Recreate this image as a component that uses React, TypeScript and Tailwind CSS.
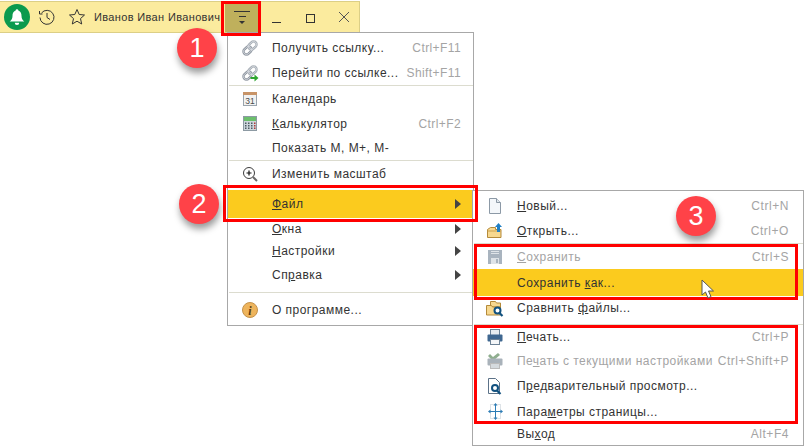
import React from 'react';

const font = 'font-["Liberation_Sans",Arial,sans-serif]';

function LinkIcon({ go }: { go?: boolean }) {
  return (
    <svg width="18" height="18" viewBox="0 0 18 18" fill="none">
      <g transform="rotate(-45 9 9)">
        <rect x="1" y="6" width="9" height="6" rx="3" stroke="#8a929c" strokeWidth="2.4" fill="#fff" />
        <rect x="8" y="6" width="9" height="6" rx="3" stroke="#a3aab2" strokeWidth="2.4" />
        <rect x="8" y="6" width="9" height="6" rx="3" stroke="#dfe3e8" strokeWidth="0.8" />
        <rect x="1" y="6" width="9" height="6" rx="3" stroke="#dfe3e8" strokeWidth="0.8" />
      </g>
      {go && <path d="M9.500 13h4v-2.500l4 3.500-4 3.500V15h-4z" fill="#2fa62f" />}
    </svg>
  );
}

function CalendarIcon() {
  return (
    <svg width="16" height="16" viewBox="0 0 16 16">
      <rect x="1.500" y="1.500" width="13" height="13" fill="#f2f2f2" stroke="#9aa4ad" />
      <rect x="1" y="1" width="14" height="3" fill="#c89468" />
      <text x="8" y="13" fontSize="8.500" textAnchor="middle" fill="#4a4a4a" fontFamily="Liberation Sans">31</text>
    </svg>
  );
}

function CalcIcon() {
  return (
    <svg width="14" height="15" viewBox="0 0 14 15">
      <rect x="0.500" y="0.500" width="13" height="14" fill="#cdd6dc" stroke="#8d9aa3" />
      <rect x="1" y="1" width="12" height="4" fill="#6cbf6c" />
      {[2, 5, 8, 11].map(x => [6.5, 9, 11.5].map(y => <rect key={`${x}-${y}`} x={x} y={y} width="1.500" height="1.500" fill={x === 11 ? '#b03a3a' : '#4d5a63'} />))}
    </svg>
  );
}

function ZoomIcon() {
  return (
    <svg width="16" height="16" viewBox="0 0 16 16" fill="none">
      <circle cx="7" cy="7" r="5.500" stroke="#3c3c3c" fill="#fff" />
      <path d="M4.500 7h5M7 4.500v5" stroke="#111" strokeWidth="1.200" />
      <path d="M11 11l4 4" stroke="#6a6a6a" strokeWidth="2" />
    </svg>
  );
}

function InfoIcon() {
  return (
    <svg width="16" height="16" viewBox="0 0 16 16">
      <circle cx="8" cy="8" r="7.500" fill="#eeb45c" stroke="#c4924a" />
      <text x="8" y="12.500" fontSize="12" fontWeight="700" fontStyle="italic" textAnchor="middle" fill="#5a3c10" fontFamily="Liberation Serif">i</text>
    </svg>
  );
}

function NewIcon() {
  return (
    <svg width="14" height="16" viewBox="0 0 14 16">
      <path d="M1.500.5h7l4 4v11h-11z" fill="#f4f7fa" stroke="#8c99a6" />
      <path d="M8.500.5v4h4" fill="#dfe6ec" stroke="#8c99a6" />
    </svg>
  );
}

function OpenIcon() {
  return (
    <svg width="16" height="16" viewBox="0 0 16 16">
      <path d="M.5 6.500l3-2h5v2h5.500v8H.5z" fill="#f7d88f" stroke="#b48a3a" />
      <path d="M.5 8h13.500" stroke="#c9a04e" />
      <path d="M11.500 0l3.500 4h-2v5h-3V4H8z" fill="#1f7fc4" />
    </svg>
  );
}

function SaveIcon() {
  return (
    <svg width="14" height="14" viewBox="0 0 14 14">
      <rect width="14" height="14" fill="#a9b4bf" />
      <rect x="3" y="1" width="8" height="1" fill="#dfe4e8" />
      <rect x="3" y="3" width="8" height="1" fill="#dfe4e8" />
      <rect x="3" y="8" width="8" height="6" fill="#dfe4e8" />
      <rect x="8" y="9" width="2" height="4" fill="#a9b4bf" />
    </svg>
  );
}

function CompareIcon() {
  return (
    <svg width="18" height="17" viewBox="0 0 18 17">
      <path d="M4.500 1.500h5l1 1.500h4v4h-10z" fill="#f7d88f" stroke="#b48a3a" />
      <path d="M.5 5.500h5l1 1.500h8v8H.5z" fill="#f7d88f" stroke="#b48a3a" />
      <circle cx="11.500" cy="10.500" r="3" fill="#fff" stroke="#11517f" strokeWidth="2" />
      <path d="M13.500 13l3 3" stroke="#11517f" strokeWidth="2.200" />
    </svg>
  );
}

function PrintIcon({ muted }: { muted?: boolean }) {
  const dark = muted ? '#a9b2ba' : '#3f6790';
  return (
    <svg width="16" height="16" viewBox="0 0 16 16">
      {muted ? (
        <path d="M1 3l2-2 3 3 5-4 2 2-7 6z" fill="#8fae8f" />
      ) : (
        <rect x="3.500" y="0.500" width="9" height="6" fill="#e8edf1" stroke="#6d8296" />
      )}
      <rect x="0.500" y="5.500" width="15" height="7" rx="1" fill={dark} />
      <rect x="3.500" y="10.500" width="9" height="5" fill={muted ? '#d5dade' : '#f4f6f8'} stroke={muted ? '#bbb' : '#6d8296'} />
    </svg>
  );
}

function PreviewIcon() {
  return (
    <svg width="16" height="17" viewBox="0 0 16 17">
      <path d="M1.500.5h7l4 4v11h-11z" fill="#fff" stroke="#5c7288" />
      <circle cx="8" cy="10" r="3" fill="#fff" stroke="#11517f" strokeWidth="2" />
      <path d="M10 12.500l3.500 3.500" stroke="#11517f" strokeWidth="2.200" />
    </svg>
  );
}

function PageIcon() {
  return (
    <svg width="15" height="17" viewBox="0 0 15 17" fill="none">
      <rect x="2.500" y="1.500" width="10" height="14" stroke="#bcc6cf" strokeDasharray="1 1" />
      <path d="M7.500 1v15M1 8.500h13" stroke="#2c7cb5" />
      <path d="M7.500 0l2 2.500h-4zM7.500 17l2-2.500h-4zM0 8.500l2.500-2v4zM15 8.500l-2.500-2v4z" fill="#2c7cb5" />
    </svg>
  );
}

function Row({ h, icon, children, hint, arrow, active, muted, sub }: {
  h: string;
  icon?: React.ReactNode;
  children: React.ReactNode;
  hint?: string;
  arrow?: boolean;
  active?: boolean;
  muted?: boolean;
  sub?: boolean;
}) {
  return (
    <div className={`flex items-center ${h} ${active ? 'bg-[#fbcb1e]' : ''}`}>
      <div className="w-[44px] flex justify-center shrink-0">{icon}</div>
      <div className={`flex-1 whitespace-nowrap tracking-[0.47px] ${muted ? 'text-[#a4a4a4]' : 'text-[#333]'}`}>{children}</div>
      {hint && <div className={`text-[#a4a4a4] whitespace-nowrap ${sub ? 'pr-[14px] tracking-[0.55px]' : 'pr-[12px] tracking-[0.4px]'}`}>{hint}</div>}
      {arrow && (
        <svg width="8" height="10" viewBox="0 0 8 10" className="mr-[11px]">
          <path d="M1 0l6 5-6 5z" fill="#444" />
        </svg>
      )}
    </div>
  );
}

function Sep() {
  return <div className="h-px bg-[#dcdccf] ml-px" />;
}

function Badge({ n, className }: { n: number; className: string }) {
  return (
    <div className={`absolute w-[40px] h-[40px] rounded-full bg-[#ff4248] text-white text-[27px] flex items-center justify-center shadow-[1px_5px_7px_rgba(0,0,0,0.4)] ${className}`}>
      {n}
    </div>
  );
}

export default function App() {
  return (
    <div className={`relative w-[804px] h-[447px] bg-white overflow-hidden text-[12px] pt-px ${font}`}>
      {/* title bar */}
      <div className="w-[360px] h-[32px] bg-[#fbeb9e] border border-l-0 border-[#dccf86] flex items-center pl-[4px]">
        <div className="w-[26px] h-[26px] rounded-full bg-[#0b9a4e] flex items-center justify-center shrink-0">
          <svg width="18" height="18" viewBox="0 0 16 16"><path d="M8 1a1.200 1.200 0 011.200 1.200C11.500 3 12 5 12 7c0 2.500 1 3.500 2.500 5h-13C3 10.500 4 9.500 4 7c0-2 .5-4 2.800-4.800A1.200 1.200 0 018 1zM6 13h4a2 2 0 01-4 0z" fill="#fff" /></svg>
        </div>
        <svg width="18" height="18" viewBox="0 0 18 18" fill="none" className="ml-[8px] shrink-0" stroke="#333">
          <path d="M3.500 5A7 7 0 112 9.500" />
          <path d="M1.500 3v3h3" />
          <path d="M9 5v4.500l3 2" />
        </svg>
        <svg width="18" height="18" viewBox="0 0 18 18" fill="none" className="ml-[12px] shrink-0" stroke="#333">
          <path d="M9 1.500l2.200 5 5.300.5-4 3.600 1.200 5.400L9 13.200 4.300 16l1.200-5.400-4-3.600 5.300-.5z" />
        </svg>
        <span className="ml-[8px] w-[127px] text-[11px] tracking-[0.35px] text-[#333] whitespace-nowrap">Иванов Иван Иванович</span>
        <div className="ml-[4px] w-[34px] h-[30px] bg-[#bfb05c] flex flex-col items-center justify-center shrink-0">
          <div className="w-[16px] h-px bg-[#333]" />
          <div className="w-[7px] h-px bg-[#333] mt-[4px]" />
          <svg width="6" height="3" viewBox="0 0 6 3" className="mt-[4px]"><path d="M0 0h6L3 3z" fill="#333" /></svg>
        </div>
        <div className="ml-[13px] w-[9px] h-px bg-[#333] mt-[10px] shrink-0" />
        <div className="ml-[25px] w-[9px] h-[9px] border border-[#333] mt-[2px] shrink-0" />
        <svg width="10" height="10" viewBox="0 0 10 10" className="ml-[24px] shrink-0" stroke="#555"><path d="M0 0l10 10M10 0L0 10" /></svg>
      </div>

      {/* first menu */}
      <div className="absolute left-[227px] top-[32px] w-[247px] h-[294px] bg-white border border-[#a8a8a8] pt-[3px]">
        <Row h="h-[24px]" icon={<LinkIcon />} hint="Ctrl+F11">Получить ссылку...</Row>
        <Row h="h-[25px]" icon={<LinkIcon go />} hint="Shift+F11">Перейти по ссылке...</Row>
        <Sep />
        <Row h="h-[25px]" icon={<CalendarIcon />}>Календарь</Row>
        <Row h="h-[25px]" icon={<CalcIcon />} hint="Ctrl+F2"><u>К</u>алькулятор</Row>
        <Row h="h-[24px]">Показать М, М+, М-</Row>
        <Sep />
        <Row h="h-[25px]" icon={<ZoomIcon />}>Изменить масштаб</Row>
        <div className="h-[4px]" />
        <Row h="h-[28px]" arrow active><u>Ф</u>айл</Row>
        <Row h="h-[22px]" arrow><u>О</u>кна</Row>
        <Row h="h-[22px]" arrow><u>Н</u>астройки</Row>
        <Row h="h-[26px]" arrow>Сп<u>р</u>авка</Row>
        <div className="h-[4px]" />
        <Sep />
        <div className="h-[4px]" />
        <Row h="h-[26px]" icon={<InfoIcon />}>О программе...</Row>
      </div>

      {/* file submenu */}
      <div className="absolute left-[472px] top-[190px] w-[332px] h-[256px] bg-white border border-[#a8a8a8] pt-[3px]">
        <Row sub h="h-[24px]" icon={<NewIcon />} hint="Ctrl+N"><u>Н</u>овый...</Row>
        <Row sub h="h-[25px]" icon={<OpenIcon />} hint="Ctrl+O"><u>О</u>ткрыть...</Row>
        <Sep />
        <Row sub h="h-[25px]" icon={<SaveIcon />} hint="Ctrl+S" muted><u>С</u>охранить</Row>
        <Row sub h="h-[27px]" active>Сохранить <u>к</u>ак...</Row>
        <Row sub h="h-[24px]" icon={<CompareIcon />}>Сравнить <u>ф</u>айлы...</Row>
        <div className="h-[4px]" />
        <Sep />
        <Row sub h="h-[23px]" icon={<PrintIcon />} hint="Ctrl+P"><u>П</u>ечать...</Row>
        <Row sub h="h-[25px]" icon={<PrintIcon muted />} hint="Ctrl+Shift+P" muted>Пе<u>ч</u>ать с текущими настройками</Row>
        <Row sub h="h-[26px]" icon={<PreviewIcon />}>П<u>р</u>едварительный просмотр...</Row>
        <Row sub h="h-[25px]" icon={<PageIcon />}>Пара<u>м</u>етры страницы...</Row>
        <Row sub h="h-[19px]" hint="Alt+F4">Вы<u>х</u>од</Row>
      </div>

      {/* annotation frames */}
      <div className="absolute left-[221px] top-[1px] w-[40px] h-[35px] border-[3px] border-[#ff0000]" />
      <div className="absolute left-[223px] top-[185px] w-[255px] h-[37px] border-[3px] border-[#ff0000]" />
      <div className="absolute left-[474px] top-[244px] w-[324px] h-[56px] border-[3px] border-[#ff0000]" />
      <div className="absolute left-[474px] top-[325px] w-[324px] h-[99px] border-[3px] border-[#ff0000]" />

      <Badge n={1} className="left-[177px] top-[28px]" />
      <Badge n={2} className="left-[179px] top-[184px]" />
      <Badge n={3} className="left-[676px] top-[196px]" />

      {/* mouse pointer */}
      <svg width="14" height="20" viewBox="0 0 14 20" className="absolute left-[701px] top-[279px]">
        <path d="M1 1v15l3.500-3 2.500 6 3-1.300-2.500-5.700H12.500z" fill="#fff" stroke="#555" />
      </svg>
    </div>
  );
}
